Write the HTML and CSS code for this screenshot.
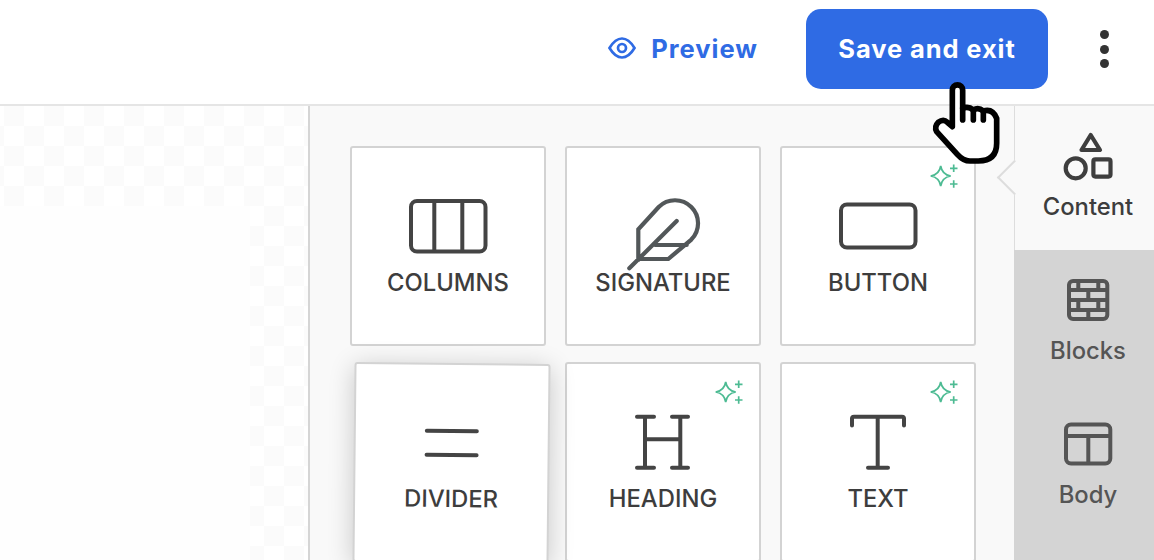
FILE: index.html
```html
<!doctype html>
<html lang="en">
<head>
  <meta charset="UTF-8">
  <title>Email editor</title>
  <link rel="stylesheet" href="styles.css">
</head>
<body>
  <header class="topbar">
    <a class="preview" href="#">
      <svg class="eye" viewBox="0 0 28 22"><path d="M1.5 11C6 3.5 10 1.5 14 1.5S22 3.5 26.5 11C22 18.5 18 20.5 14 20.5S6 18.5 1.5 11Z"/><circle cx="14" cy="11" r="4"/></svg>
      Preview
    </a>
    <button class="save">Save and exit</button>
    <div class="kebab"><i></i><i></i><i></i></div>
  </header>

  <main class="editor">
    <div class="canvas"><div class="sheet"></div></div>

    <section class="panel">
      <div class="card">
        <svg class="icon" viewBox="0 0 80 80"><rect x="3" y="15" width="74.5" height="50.5" rx="6"/><path d="M26.3 15V65M54.3 15V65"/></svg>
        <span class="label">COLUMNS</span>
      </div>
      <div class="card">
        <svg class="icon feather" viewBox="0 0 80 80"><path d="M15.3 74V43.3L35.7 21A23 23 0 0 1 68.3 53.6L45.3 73H17M6.3 82.3L53.7 35M32 59H63.7"/></svg>
        <span class="label">SIGNATURE</span>
      </div>
      <div class="card">
        <svg class="spark" viewBox="0 0 30 30"><path d="M10.7 3Q12 11.5 20.7 13Q12 14.5 10.7 23Q9.4 14.5 .7 13Q9.4 11.5 10.7 3ZM23.7 1.5V9M20 5.3H27.5M23.7 17.2V24.8M20 21H27.5"/></svg>
        <svg class="icon" viewBox="0 0 80 80"><rect x="3" y="18.5" width="74.5" height="43" rx="6"/></svg>
        <span class="label">BUTTON</span>
      </div>
      <div class="card dragging">
        <svg class="icon" viewBox="0 0 80 80"><path d="M15 28H65M15 52H65"/></svg>
        <span class="label">DIVIDER</span>
      </div>
      <div class="card">
        <svg class="spark" viewBox="0 0 30 30"><path d="M10.7 3Q12 11.5 20.7 13Q12 14.5 10.7 23Q9.4 14.5 .7 13Q9.4 11.5 10.7 3ZM23.7 1.5V9M20 5.3H27.5M23.7 17.2V24.8M20 21H27.5"/></svg>
        <svg class="icon" viewBox="0 0 80 80"><path d="M14 14.7H31M49 14.7H65M14 65.7H31M49 65.7H65M22 14.7V65.7M57.3 14.7V65.7M22 37.3H57.3"/></svg>
        <span class="label">HEADING</span>
      </div>
      <div class="card">
        <svg class="spark" viewBox="0 0 30 30"><path d="M10.7 3Q12 11.5 20.7 13Q12 14.5 10.7 23Q9.4 14.5 .7 13Q9.4 11.5 10.7 3ZM23.7 1.5V9M20 5.3H27.5M23.7 17.2V24.8M20 21H27.5"/></svg>
        <svg class="icon" viewBox="0 0 80 80"><path d="M14 23.5V16.5Q14 14.7 16 14.7H64Q66 14.7 66 16.5V23.5M39.7 14.7V65.7M30 65.7H50"/></svg>
        <span class="label">TEXT</span>
      </div>
    </section>

    <nav class="tabs">
      <div class="tab active">
        <svg class="tab-icon" viewBox="0 0 56 56"><path d="M30.7 7L40 22H21.5Z"/><circle cx="15.7" cy="40.3" r="10"/><rect x="33.4" y="31.4" width="17.1" height="17.2" rx="2"/></svg>
        <span>Content</span>
      </div>
      <div class="tab">
        <svg class="tab-icon" viewBox="0 0 56 56"><rect x="9" y="9" width="38.3" height="38" rx="4"/><path d="M9 18H47M9 28H47M9 38H47M18.3 9V18M38.3 9V18M28.3 18V28M18.3 28V38M38.3 28V38M28.3 38V47"/></svg>
        <span>Blocks</span>
      </div>
      <div class="tab">
        <svg class="tab-icon" viewBox="0 0 56 56"><rect x="6" y="8.5" width="44.3" height="39" rx="5"/><path d="M6 20H50M28.3 20V47"/></svg>
        <span>Body</span>
      </div>
    </nav>
  </main>

  <svg class="cursor" viewBox="0 0 300 300"><path d="M97 155V45A15.5 15.5 0 0 1 128 45V100Q145 92 160 105Q175 95 190 108Q218 100 230 130V205Q230 258 175 258H150Q130 258 112 238L50 170Q42 155 55 142Q70 130 82 142Z"/><path d="M128 100V135M160 105V135M190 108V135"/></svg>
</body>
</html>
```

FILE: styles.css
```css
html,body{margin:0;padding:0;height:560px;overflow:hidden;background:#fff;}
body{font-family:"Inter","Liberation Sans",sans-serif;color:#3d3d3d;position:relative;}
svg{display:block;overflow:visible;fill:none;}

.topbar{height:104px;box-sizing:border-box;padding-bottom:6px;display:flex;align-items:center;justify-content:flex-end;}
.preview{display:flex;align-items:center;gap:15px;margin:0 48px 2px 0;color:#2f6be4;text-decoration:none;font-weight:700;font-size:25.5px;letter-spacing:1px;}
.eye{width:28px;height:22px;stroke:#2f6be4;stroke-width:2.7;}
.save{width:242px;height:80px;padding:0 0 2px;border:0;border-radius:15px;background:#2f6be4;color:#fff;font-family:"Inter",sans-serif;font-weight:700;font-size:25.5px;letter-spacing:.9px;}
.kebab{display:flex;flex-direction:column;gap:5.5px;margin:0 45px 0 52px;}
.kebab i{display:block;width:9px;height:9px;border-radius:50%;background:#333;}

.editor{display:flex;height:456px;border-top:2px solid #e5e5e5;}
.canvas{width:308px;flex:none;background:conic-gradient(#fbfbfb 25%,#fff 0 50%,#fbfbfb 0 75%,#fff 0) -16px 0/40px 40px;padding-top:100px;box-sizing:border-box;}
.sheet{width:250px;height:100%;background:#fefefe;}

.panel{width:706px;flex:none;box-sizing:border-box;border-left:2px solid #d5d5d5;background:#f9f9f9;padding:40px 0 0 40px;display:grid;grid-template-columns:repeat(3,196px);grid-auto-rows:200px;column-gap:19px;row-gap:16px;}
.card{position:relative;box-sizing:border-box;background:#fff;border:2px solid #d3d3d3;border-radius:3px;padding-top:38px;display:flex;flex-direction:column;align-items:center;}
.dragging{transform:translate(3.5px,1px) rotate(.6deg);box-shadow:0 4px 26px rgba(0,0,0,.2);z-index:1;}
.dragging .label{margin-top:2px;}
.icon{width:80px;height:80px;flex:none;stroke:#444;stroke-width:4;stroke-linecap:round;stroke-linejoin:round;}
.feather{stroke:#525759;stroke-width:4.2;stroke-linecap:round;stroke-linejoin:miter;}
.label{position:relative;margin-top:3px;font-size:23.8px;line-height:28px;font-weight:500;color:#3d3d3d;}
.spark{position:absolute;top:15px;right:14px;width:30px;height:30px;stroke:#4dbb93;stroke-width:1.7;}

.tabs{width:140px;flex:none;background:#d4d4d4;}
.tab{position:relative;box-sizing:border-box;height:144px;padding:22px 0 0 8px;display:flex;flex-direction:column;align-items:center;font-size:23.8px;line-height:28px;font-weight:500;color:#555;}
.tab span{margin-top:9px;}
.tab.active{background:#f9f9f9;color:#3d3d3d;border-left:1px solid #ddd;padding-left:7px;}
.tab.active::before{content:"";position:absolute;left:-13px;top:59px;width:25px;height:25px;background:#f9f9f9;border-left:2px solid #ddd;border-bottom:2px solid #ddd;box-sizing:border-box;transform:rotate(45deg);}
.tab-icon{position:relative;width:56px;height:56px;flex:none;stroke:#555;stroke-width:4;stroke-linejoin:round;}
.active .tab-icon{stroke:#3e3e3e;stroke-width:4.2;}

.cursor{position:absolute;left:920px;top:75px;width:100px;height:100px;fill:#fff;stroke:#000;stroke-width:17;stroke-linejoin:round;stroke-linecap:round;z-index:5;}
```
